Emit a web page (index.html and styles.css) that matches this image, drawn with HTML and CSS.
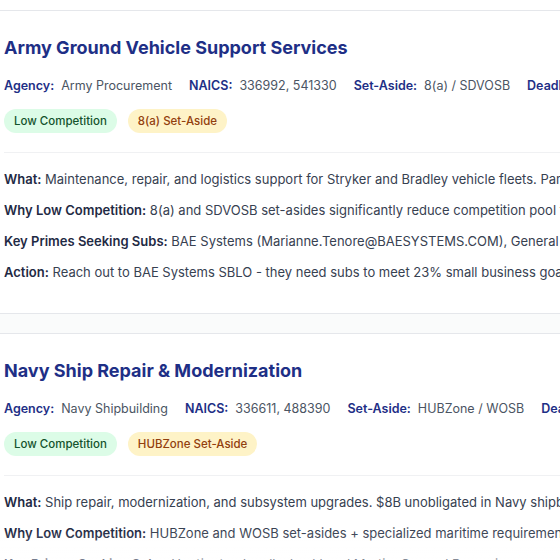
FILE: index.html
```html
<!DOCTYPE html>
<html>
<head>
<meta charset="utf-8">
<link rel="stylesheet" href="styles.css">
</head>
<body>
<div class="list">
  <section class="card">
    <h2 class="title">Army Ground Vehicle Support Services</h2>
    <div class="meta">
      <span class="item"><b class="k">Agency:</b><span class="v">Army Procurement</span></span>
      <span class="item"><b class="k">NAICS:</b><span class="v">336992, 541330</span></span>
      <span class="item"><b class="k">Set-Aside:</b><span class="v">8(a) / SDVOSB</span></span>
      <span class="item"><b class="k">Deadline:</b><span class="v">March 15, 2025</span></span>
    </div>
    <div class="badges">
      <span class="badge green">Low Competition</span>
      <span class="badge amber">8(a) Set-Aside</span>
    </div>
    <div class="details">
      <p class="row"><b>What:</b> Maintenance, repair, and logistics support for Stryker and Bradley vehicle fleets. Parts and sustainment across multiple installations.</p>
      <p class="row"><b>Why Low Competition:</b> 8(a) and SDVOSB set-asides significantly reduce competition pool to qualified small businesses.</p>
      <p class="row"><b>Key Primes Seeking Subs:</b> BAE Systems (Marianne.Tenore@BAESYSTEMS.COM), General Dynamics Land Systems</p>
      <p class="row"><b>Action:</b> Reach out to BAE Systems SBLO - they need subs to meet 23% small business goals on this vehicle program.</p>
    </div>
  </section>
  <section class="card">
    <h2 class="title">Navy Ship Repair &amp; Modernization</h2>
    <div class="meta">
      <span class="item"><b class="k">Agency:</b><span class="v">Navy Shipbuilding</span></span>
      <span class="item"><b class="k">NAICS:</b><span class="v">336611, 488390</span></span>
      <span class="item"><b class="k">Set-Aside:</b><span class="v">HUBZone / WOSB</span></span>
      <span class="item"><b class="k">Deadline:</b><span class="v">April 30, 2025</span></span>
    </div>
    <div class="badges">
      <span class="badge green">Low Competition</span>
      <span class="badge amber">HUBZone Set-Aside</span>
    </div>
    <div class="details">
      <p class="row"><b>What:</b> Ship repair, modernization, and subsystem upgrades. $8B unobligated in Navy shipbuilding funds for this fiscal year.</p>
      <p class="row"><b>Why Low Competition:</b> HUBZone and WOSB set-asides + specialized maritime requirements limit the bidder pool.</p>
      <p class="row"><b>Key Primes Seeking Subs:</b> Huntington Ingalls, Lockheed Martin, General Dynamics</p>
      <p class="row"><b>Action:</b> Contact Huntington Ingalls small business office for subcontracting opportunities.</p>
    </div>
  </section>
</div>
<div class="haze"></div>
</body>
</html>
```
FILE: styles.css
```css
html, body {
  margin: 0;
  padding: 0;
  background: #ffffff;
  overflow: hidden;
}
body {
  padding-top: 10px;
  font-family: Inter, "Noto Sans", "Liberation Sans", sans-serif;
  color: #374151;
  width: 900px;
}
.list {
  display: flex;
  flex-direction: column;
  gap: 19px;
  background: #fafbfb;
}
.card {
  background: #ffffff;
  border-top: 1px solid #e5e7eb;
  border-bottom: 1px solid #e5e7eb;
  padding: 25px 0 31px 4px;
}
.title {
  margin: 0;
  font-size: 18px;
  line-height: 24px;
  font-weight: 700;
  color: #1e2f86;
  white-space: nowrap;
}
.meta {
  display: flex;
  gap: 17px;
  margin-top: 16px;
  font-size: 12.5px;
  line-height: 20px;
  white-space: nowrap;
}
.k {
  color: #1e2f86;
  font-weight: 600;
  margin-right: 7px;
}
.v {
  color: #4b5563;
}
.badges {
  display: flex;
  gap: 11px;
  margin-top: 13px;
}
.badge {
  display: inline-flex;
  align-items: center;
  height: 24px;
  padding: 0 10px;
  border-radius: 12px;
  font-size: 11.5px;
  font-weight: 500;
}
.green {
  background: #dcfce7;
  color: #14532d;
}
.amber {
  background: #fef3c7;
  color: #92400e;
}
.details {
  margin-top: 19px;
  border-top: 1px solid #f0f1f3;
  padding-top: 16px;
  display: flex;
  flex-direction: column;
  gap: 11px;
}
.row {
  margin: 0;
  font-size: 13px;
  line-height: 20px;
  white-space: nowrap;
  color: #374151;
}
.row b {
  color: #1f2a44;
  font-weight: 600;
}
.haze {
  position: fixed;
  left: 0;
  right: 0;
  bottom: 0;
  height: 30px;
  background: linear-gradient(to bottom, rgba(255,255,255,0), rgba(255,255,255,0.4));
  pointer-events: none;
}
```
